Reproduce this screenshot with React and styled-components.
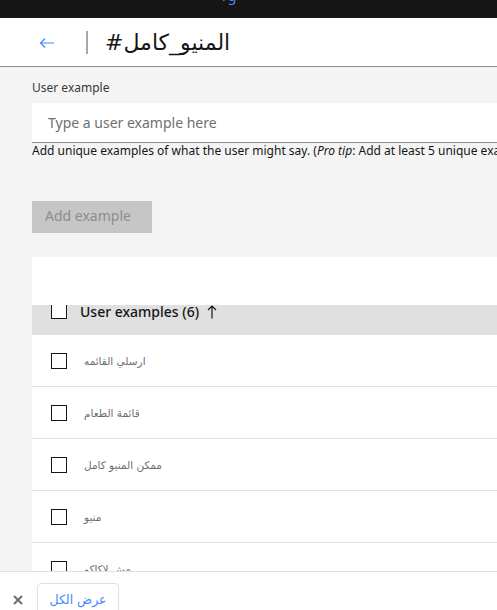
import React from "react";
import styled, { createGlobalStyle } from "styled-components";

const GlobalStyle = createGlobalStyle`
  html, body, #root {
    margin: 0;
    height: 100%;
  }
  body {
    font-family: "Noto Sans", "DejaVu Sans", sans-serif;
    color: #161616;
    overflow: hidden;
  }
  * {
    box-sizing: border-box;
  }
`;

const examples = [
  "ارسلي القائمه",
  "قائمة الطعام",
  "ممكن المنيو كامل",
  "منيو",
  "مش لاكاكو",
  "عرض القائمة",
];

const App = () => {
  return (
    <>
      <GlobalStyle />
      <Page>
        <TopBar>
          <TopLink>rg</TopLink>
        </TopBar>
        <Header>
          <BackButton aria-label="back">
            <svg width="16" height="12" viewBox="0 0 16 12" fill="none">
              <path d="M15 6H1.5M6 1.5L1.5 6L6 10.5" stroke="#4589ff" strokeWidth="1.2" />
            </svg>
          </BackButton>
          <Divider />
          <Title>#المنيو_كامل</Title>
        </Header>

        <Main>
          <Label>User example</Label>
          <Input placeholder="Type a user example here" />
          <Helper>
            Add unique examples of what the user might say. (<i>Pro tip</i>: Add at least 5 unique examples)
          </Helper>
          <AddButton disabled>Add example</AddButton>

          <Panel>
            <Toolbar />
            <HeadRow>
              <HeadInner>
                <Checkbox />
                <HeadText>User examples (6)</HeadText>
                <SortArrow width="10" height="14" viewBox="0 0 10 14" fill="none">
                  <path d="M5 13.5V1M1 5L5 1L9 5" stroke="#161616" strokeWidth="1.2" />
                </SortArrow>
              </HeadInner>
            </HeadRow>
            {examples.map((text) => (
              <Row key={text}>
                <Checkbox />
                <RowText>{text}</RowText>
              </Row>
            ))}
          </Panel>
        </Main>

        <Footer>
          <CloseButton aria-label="close">
            <svg width="10" height="10" viewBox="0 0 10 10">
              <path d="M1 1L9 9M9 1L1 9" stroke="#6f6f6f" strokeWidth="2" />
            </svg>
          </CloseButton>
          <ShowAll>عرض الكل</ShowAll>
        </Footer>
      </Page>
    </>
  );
};

const Page = styled.div`
  height: 100vh;
  display: flex;
  flex-direction: column;
  background: #f4f4f4;
`;

const TopBar = styled.div`
  height: 18px;
  flex: none;
  background: #161616;
  display: flex;
  overflow: hidden;
  padding-left: 222px;
`;

const TopLink = styled.span`
  margin-top: -12px;
  color: #4589ff;
  font-size: 14px;
  line-height: 16px;
`;

const Header = styled.header`
  height: 49px;
  flex: none;
  background: #fff;
  border-bottom: 1px solid #8d8d8d;
  display: flex;
  align-items: center;
  padding-left: 39px;
`;

const BackButton = styled.button`
  border: none;
  background: none;
  padding: 0;
  display: flex;
  margin-top: 1px;
`;

const Divider = styled.div`
  width: 2px;
  height: 23px;
  background: #a8a8a8;
  margin-left: 31px;
  margin-top: 1px;
`;

const Title = styled.h1`
  margin: 0 0 0 17px;
  font-family: "DejaVu Sans", sans-serif;
  font-weight: 400;
  font-size: 22px;
  color: #161616;
`;

const Main = styled.main`
  flex: 1;
  overflow: hidden;
  padding: 14px 0 0 32px;
`;

const Label = styled.div`
  font-size: 12px;
  line-height: 14px;
  color: #393939;
  margin-bottom: 8px;
`;

const Input = styled.input`
  display: block;
  width: 100%;
  height: 40px;
  border: none;
  border-bottom: 1px solid #8d8d8d;
  background: #fff;
  padding: 0 16px;
  font-family: inherit;
  font-size: 14px;
  &::placeholder {
    color: #6f6f6f;
  }
`;

const Helper = styled.div`
  font-size: 12px;
  line-height: 15px;
  color: #161616;
  white-space: nowrap;
`;

const AddButton = styled.button`
  display: block;
  margin-top: 43px;
  width: 120px;
  height: 32px;
  border: none;
  background: #c6c6c6;
  color: #8d8d8d;
  font-family: inherit;
  font-size: 14px;
  line-height: 16px;
  text-align: left;
  padding: 0 13px 2px;
`;

const Panel = styled.section`
  margin-top: 24px;
  background: #fff;
`;

const Toolbar = styled.div`
  height: 48px;
`;

const HeadRow = styled.div`
  height: 30px;
  background: #e0e0e0;
  overflow: hidden;
  padding-left: 19px;
`;

const HeadInner = styled.div`
  display: flex;
  align-items: center;
  height: 18px;
  margin-top: -3px;
`;

const Checkbox = styled.span`
  flex: none;
  width: 16px;
  height: 16px;
  border: 1px solid #161616;
  background: #fff;
`;

const HeadText = styled.span`
  margin-left: 13px;
  font-size: 14px;
  font-weight: 500;
  color: #161616;
`;

const SortArrow = styled.svg`
  margin-left: 8px;
  margin-top: 1px;
`;

const Row = styled.div`
  height: 52px;
  display: flex;
  align-items: center;
  padding-left: 19px;
  border-bottom: 1px solid #e0e0e0;
`;

const RowText = styled.span`
  margin-left: 17px;
  font-family: "DejaVu Sans", sans-serif;
  font-size: 10.5px;
  color: #6f6f6f;
`;

const Footer = styled.footer`
  height: 39px;
  flex: none;
  background: #fff;
  border-top: 1px solid #e0e0e0;
  display: flex;
  align-items: flex-start;
  padding: 11px 0 0 13px;
  overflow: hidden;
`;

const CloseButton = styled.button`
  border: none;
  background: none;
  padding: 0;
  margin-top: 12px;
  display: flex;
`;

const ShowAll = styled.button`
  margin-left: 14px;
  width: 82px;
  height: 34px;
  border: 1px solid #e0e0e0;
  border-radius: 4px;
  background: #fff;
  color: #4589ff;
  font-family: "DejaVu Sans", sans-serif;
  font-size: 12.5px;
  padding: 0 0 2px;
`;

export default App;
